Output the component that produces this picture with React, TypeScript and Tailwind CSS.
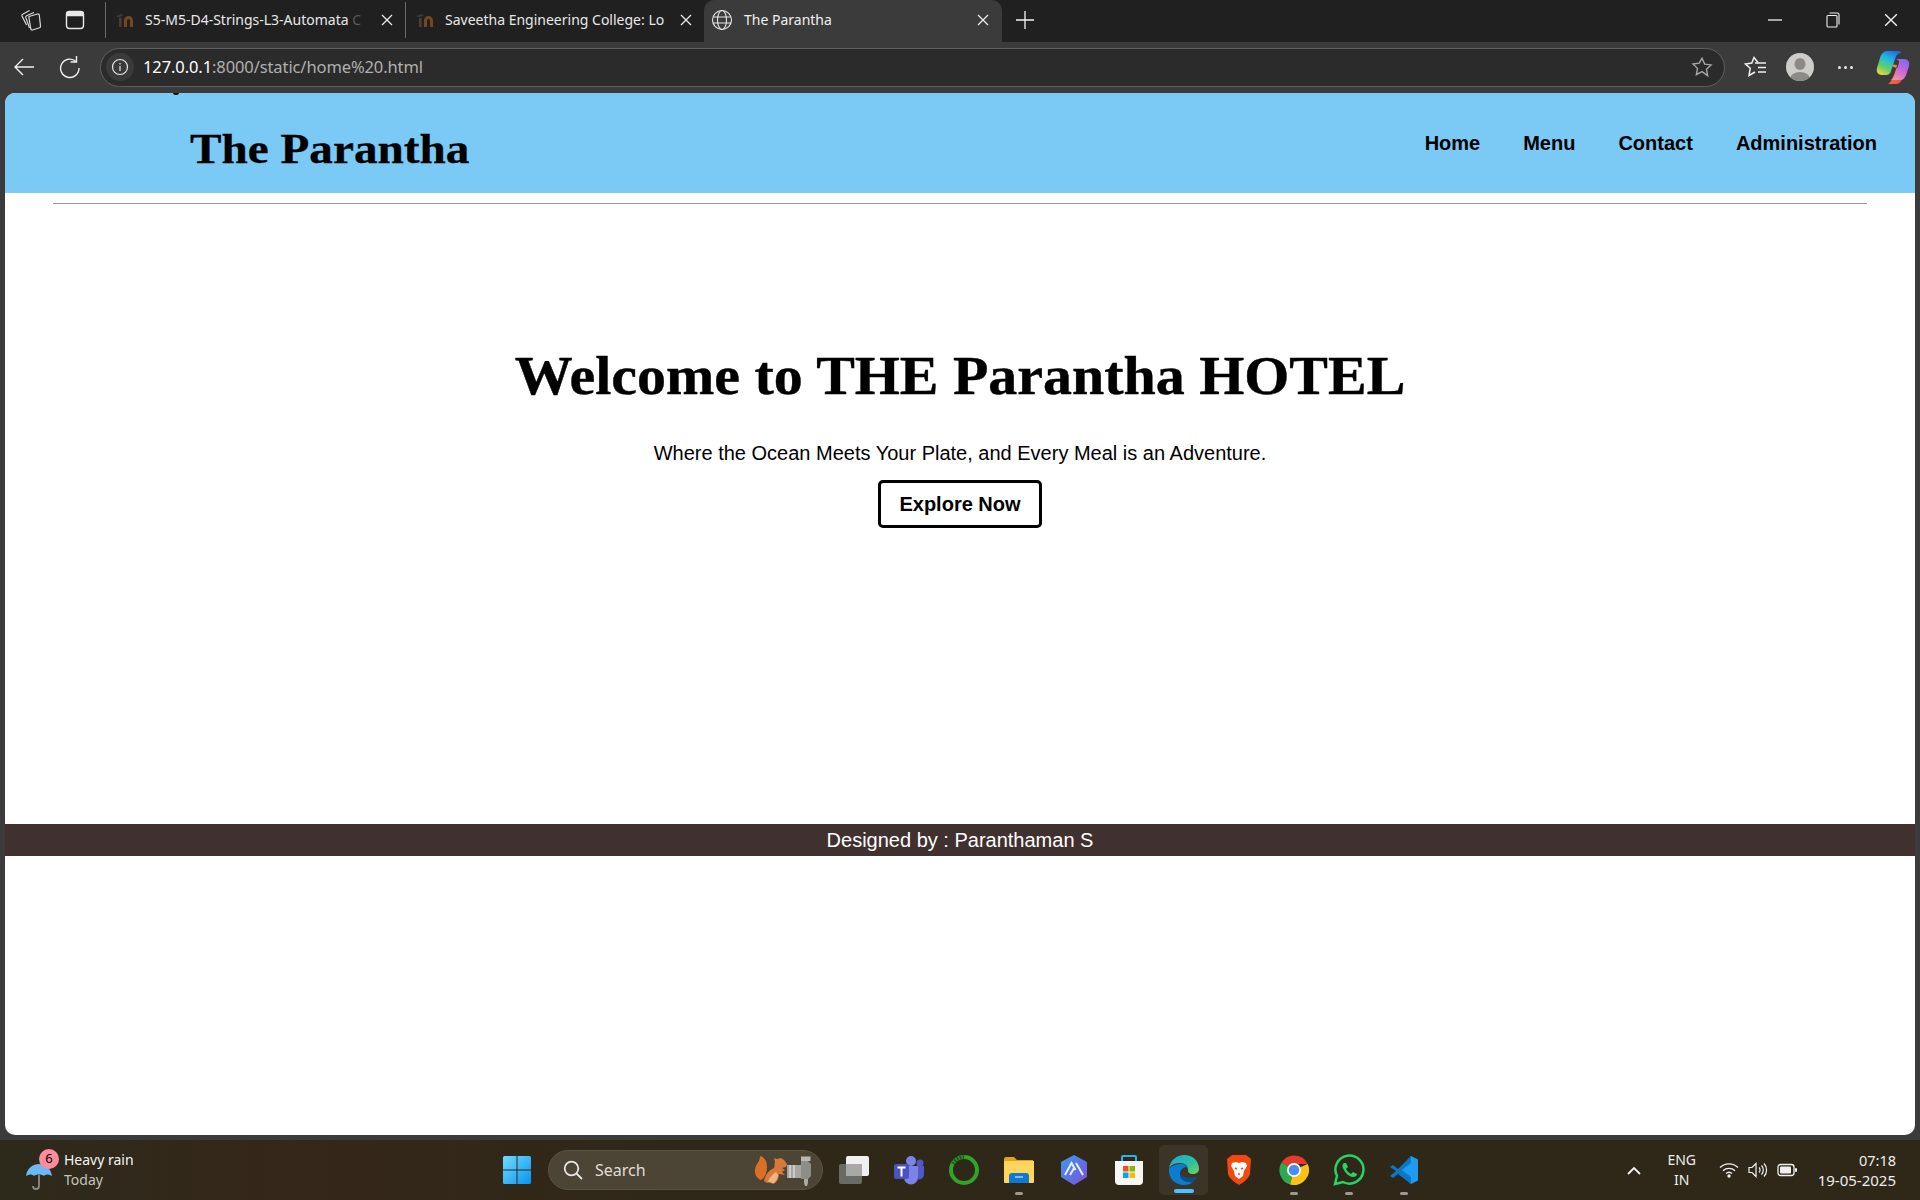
import React from "react";

const ui = { fontFamily: '"Noto Sans", "Open Sans", sans-serif' };
const arial = { fontFamily: '"Liberation Sans", Arial, sans-serif' };
const serif = { fontFamily: '"Liberation Serif", "Times New Roman", serif' };

function Close({ size = 12 }: { size?: number }) {
  return (
    <svg width={size} height={size} viewBox="0 0 12 12" fill="none" stroke="#f0f0f0" strokeWidth="1.2" className="shrink-0">
      <path d="M1 1l10 10M11 1L1 11" />
    </svg>
  );
}

function InFav() {
  return (
    <svg width="22" height="16" viewBox="0 0 22 16" className="shrink-0">
      <path d="M1 4l5-2 3 1-5 2.500z" fill="#3d3a36" />
      <path d="M4 6h2.600v9H4z" fill="#4f3c2a" />
      <path d="M9 15V8.500a4.500 4.500 0 0 1 9 0V15h-3V8.500a1.500 1.500 0 0 0-3 0V15z" fill="#74471f" />
    </svg>
  );
}

function Tab({ title, faded, w }: { title: string; faded: string; w: string }) {
  return (
    <div className={`flex items-center h-[36px] border-l border-[#6a6a6a] pl-[9px] pr-[12px] ${w}`}>
      <InFav />
      <span className="mb-[2px] ml-[8px] flex-1 whitespace-nowrap text-[14px] text-[#e8e8e8]" style={ui}>
        {title}
        <span className="text-[#5a5a5a]">{faded}</span>
      </span>
      <Close />
    </div>
  );
}

function Copilot() {
  return (
    <svg width="34" height="36" viewBox="0 0 34 36">
      <defs>
        <linearGradient id="cpa" x1="0.7" y1="0" x2="0.2" y2="1"><stop offset="0" stopColor="#1d6fe8" /><stop offset="0.35" stopColor="#22b8e0" /><stop offset="0.7" stopColor="#5fd06a" /><stop offset="1" stopColor="#f2d23a" /></linearGradient>
        <linearGradient id="cpb" x1="0.8" y1="0" x2="0.3" y2="1"><stop offset="0" stopColor="#7a6cf0" /><stop offset="0.5" stopColor="#c765dd" /><stop offset="1" stopColor="#f08fa8" /></linearGradient>
        <linearGradient id="cpc" x1="0" y1="0" x2="1" y2="1"><stop offset="0" stopColor="#f6a02c" /><stop offset="1" stopColor="#ee3f4a" /></linearGradient>
      </defs>
      <path d="M12 15l9 1c-1 5-3 11-6 16-1 2-3 3-3 3h8c3 0 5-2 6-5l2-7z" fill="url(#cpc)" />
      <path d="M11 2h11c2 0 3 1 3 2-3 0-5 2-6 6l-4 12c-1 3-3 4-5 4H6c-4 0-6-3-5-7l3-10c1-4 4-7 7-7z" fill="url(#cpa)" />
      <path d="M20 10h8c4 0 6 3 5 7l-3 9c-1 3-3 5-6 5h-9c2-1 3-3 4-6l4-11c0-2 0-3-3-4z" fill="url(#cpb)" />
    </svg>
  );
}

function WinLogo() {
  return (
    <svg width="30" height="30" viewBox="0 0 30 30">
      <defs>
        <linearGradient id="win" x1="0" y1="0" x2="1" y2="1"><stop offset="0" stopColor="#6fdcff" /><stop offset="1" stopColor="#0a93f0" /></linearGradient>
      </defs>
      <path d="M1 2.5A1.5 1.5 0 0 1 2.500 1H14.500V14.500H1zM15.500 1H27.500A1.500 1.500 0 0 1 29 2.500V14.500H15.500zM1 15.500H14.500V29H2.500A1.500 1.500 0 0 1 1 27.500zM15.500 15.500H29V27.500A1.500 1.500 0 0 1 27.500 29H15.500z" fill="url(#win)" />
    </svg>
  );
}

function Squirrel() {
  return (
    <svg width="62" height="32" viewBox="0 0 62 32" className="shrink-0">
      <path d="M7 26C1 24-1 16 3 10c2-3 3-5 3-8 4 1 7 5 7 10 0 5-1 11-6 14z" fill="#d96f28" />
      <path d="M10 27c1-6 5-11 10-13 1-2 0-4 1-6l-1-4 3 1 4-1 3 2 3 4-1 3-4 1 3 2-3 2 3 3-6-1c0 5-3 10-7 10l-1-2-4 1z" fill="#d57a38" />
      <path d="M14 27c2-4 5-7 8-9l2 3c0 3-2 6-4 8-2 0-4 0-6-2z" fill="#f2b483" />
      <path d="M33 11h14v13H33z" fill="#a5a5a1" />
      <path d="M36 11v13M40 11v13" stroke="#e3e3df" strokeWidth="1.200" />
      <path d="M47 7h7l3 3v12l-3 3h-7z" fill="#8e8e89" />
      <path d="M47 2.500h9.500V7H47z" fill="#b9b9b4" />
      <path d="M50 25h4v4l-1 3h-2l-1-3z" fill="#aaaaa5" />
    </svg>
  );
}

function Slot({ children, dot }: { children: React.ReactNode; dot?: boolean }) {
  return (
    <div className="relative flex h-[50px] w-[55px] items-center justify-center">
      {children}
      {dot && <span className="absolute bottom-[0px] h-[3px] w-[8px] rounded-full bg-[#9a9a92]" />}
    </div>
  );
}

export default function App() {
  return (
    <div className="flex h-[1200px] w-[1920px] flex-col overflow-hidden bg-[#3b3b3b]">
      {/* tab strip */}
      <div className="flex h-[42px] items-center bg-[#202020] pb-[2px]">
        <div className="flex w-[62px] justify-center">
          <svg width="24" height="24" viewBox="0 0 24 24" fill="none" stroke="#d8d8d8" strokeWidth="1.200">
            <path d="M10 8.500l8.500-2.500a1.500 1.500 0 0 1 1.800 1l1.200 11a1.500 1.500 0 0 1-1 1.700L13.500 22a1.500 1.500 0 0 1-1.700-1L10 10z" />
            <path d="M10.500 20L6.800 9.500a1.500 1.500 0 0 1 .8-1.800L15 4.500" />
            <path d="M7.500 17L3 8a1.500 1.500 0 0 1 .7-1.800L10.500 2.500" />
          </svg>
        </div>
        <div className="-ml-[8px] flex w-[42px] justify-center">
          <svg width="20" height="20" viewBox="0 0 20 20" fill="none" stroke="#e8e8e8" strokeWidth="1.400">
            <rect x="1.500" y="1.500" width="17" height="17" rx="3" />
            <path d="M2 2.500h16v3H2z" fill="#e8e8e8" />
          </svg>
        </div>
        <div className="ml-[9px] flex items-center">
          <Tab title="S5-M5-D4-Strings-L3-Automata " faded="C" w="w-[300px]" />
          <Tab title="Saveetha Engineering College: Lo" faded="" w="w-[299px]" />
        </div>
        <div className="flex h-[42px] w-[298px] self-start items-center rounded-t-[10px] bg-[#3b3b3b] pb-[2px] pl-[6px] pr-[13px]">
          <svg width="22" height="22" viewBox="0 0 22 22" fill="none" stroke="#e8e8e8" strokeWidth="1.100" className="ml-[1px] shrink-0">
            <circle cx="11" cy="11" r="9.500" />
            <ellipse cx="11" cy="11" rx="4.500" ry="9.500" />
            <path d="M2 8h18M2 14h18" />
          </svg>
          <span className="mb-[2px] ml-[11px] flex-1 text-[14px] text-[#f0f0f0]" style={ui}>The Parantha</span>
          <Close />
        </div>
        <div className="ml-[14px] flex">
          <svg width="18" height="18" viewBox="0 0 18 18" stroke="#f4f4f4" strokeWidth="1.300"><path d="M9 0v18M0 9h18" /></svg>
        </div>
        <div className="ml-auto flex items-center">
          <div className="flex w-[58px] justify-center">
            <svg width="14" height="2" viewBox="0 0 14 2"><path d="M0 1h14" stroke="#f0f0f0" strokeWidth="1.300" /></svg>
          </div>
          <div className="flex w-[58px] justify-center">
            <svg width="14" height="16" viewBox="0 0 14 16" fill="none" stroke="#f0f0f0" strokeWidth="1.100"><rect x="1" y="3.500" width="10" height="11.500" rx="1" /><path d="M3.500 1h8a1.500 1.500 0 0 1 1.500 1.500v10" /></svg>
          </div>
          <div className="flex w-[58px] justify-center">
            <Close size={14} />
          </div>
        </div>
      </div>

      {/* toolbar */}
      <div className="flex h-[51px] items-center pb-[1px]">
        <div className="flex w-[48px] justify-center">
          <svg width="22" height="20" viewBox="0 0 22 20" fill="none" stroke="#f0f0f0" strokeWidth="1.400"><path d="M21 10H2M10 2l-8 8 8 8" /></svg>
        </div>
        <div className="flex w-[44px] justify-center">
          <svg width="22" height="24" viewBox="0 0 22 24" fill="none" stroke="#f0f0f0" strokeWidth="1.400"><path d="M17 6.500A9.200 9.200 0 1 0 20 13" /><path d="M17.500 1v6h-6" /></svg>
        </div>
        <div className="ml-[8px] flex h-[39px] w-[1625px] items-center rounded-full border border-[#5f5f5f] bg-[#2b2b2b] pl-[5px] pr-[11px]">
          <div className="flex h-[28px] w-[28px] items-center justify-center rounded-full bg-[#3a3a3a]">
            <svg width="18" height="18" viewBox="0 0 18 18" fill="none" stroke="#e8e8e8" strokeWidth="1.200"><circle cx="9" cy="9" r="7.500" /><path d="M9 8v5M9 5v1.500" /></svg>
          </div>
          <span className="ml-[9px] mt-[1px] whitespace-nowrap text-[16.500px] tracking-[-0.1px]" style={ui}>
            <span className="text-white">127.0.0.1</span>
            <span className="text-[#b0b0b0]">:8000/static/home%20.html</span>
          </span>
          <span className="ml-auto flex">
            <svg width="22" height="22" viewBox="0 0 24 24" fill="none" stroke="#a8a8a8" strokeWidth="1.500"><path d="M12 2.500l3 6.300 6.900.9-5 4.800 1.300 6.900L12 17.100 5.800 20.400l1.300-6.900-5-4.800 6.900-.9z" /></svg>
          </span>
        </div>
        <div className="flex w-[61px] justify-center">
          <svg width="24" height="24" viewBox="0 0 24 24" fill="none" stroke="#f0f0f0" strokeWidth="1.500"><path d="M14 7.500L10 2.500 7.800 8 1.500 9l4.700 4.300L5 20.500l6-3.500" /><path d="M11 8h11M14 12.500h8M14 17h8" /></svg>
        </div>
        <div className="flex h-[28px] w-[28px] items-center justify-center overflow-hidden rounded-full bg-[#cfcdc9]">
          <svg width="28" height="28" viewBox="0 0 28 28"><ellipse cx="14" cy="11" rx="5.500" ry="6" fill="#8c8a86" /><ellipse cx="14" cy="26" rx="10" ry="7" fill="#8c8a86" /></svg>
        </div>
        <div className="flex w-[62px] justify-center gap-[3px]">
          <span className="h-[3px] w-[3px] rounded-full bg-[#e8e8e8]" />
          <span className="h-[3px] w-[3px] rounded-full bg-[#e8e8e8]" />
          <span className="h-[3px] w-[3px] rounded-full bg-[#e8e8e8]" />
        </div>
        <div className="flex"><Copilot /></div>
      </div>

      {/* page */}
      <div className="relative mx-[5px] flex h-[1042px] flex-col overflow-hidden rounded-[10px] bg-white">
        <header className="flex h-[100px] shrink-0 items-center justify-between bg-[#7bc9f5] pl-[185px] pr-[38px]">
          <span className="absolute left-[168px] top-[-3px] h-[5px] w-[6px] rounded-full bg-black" />
          <h1 className="mt-[11px] origin-left scale-x-[1.098] text-[43px] font-bold leading-none text-black [-webkit-text-stroke:0.3px_black]" style={serif}>The Parantha</h1>
          <nav className="flex gap-[43px] text-[20px] font-bold text-black" style={arial}>
            <span>Home</span>
            <span>Menu</span>
            <span>Contact</span>
            <span>Administration</span>
          </nav>
        </header>
        <main className="flex h-[631px] shrink-0 flex-col items-center" style={arial}>
          <div className="mt-[10px] h-[1px] w-[1814px] shrink-0 bg-[#999999]" />
          <h2 className="mt-[142px] scale-x-[1.073] text-[54px] font-bold leading-[60px] text-black [-webkit-text-stroke:0.4px_black]" style={serif}>Welcome to THE Parantha HOTEL</h2>
          <p className="mt-[31px] text-[20px] leading-[32px] text-black">Where the Ocean Meets Your Plate, and Every Meal is an Adventure.</p>
          <button className="mt-[11px] h-[48px] w-[164px] rounded-[5px] border-[3px] border-black bg-white text-[20px] font-bold text-black">Explore Now</button>
        </main>
        <footer className="flex h-[32px] shrink-0 items-center justify-center bg-[#413030] text-[20px] text-white" style={arial}>
          Designed by : Paranthaman S
        </footer>
      </div>

      {/* taskbar */}
      <div className="mt-[5px] flex h-[60px] shrink-0 items-center bg-[linear-gradient(90deg,#2d2a1b,#35271a_15%,#2f2818_35%,#2f2818_100%)] text-white" style={ui}>
        <div className="flex w-[502px] shrink-0 items-center">
          <div className="relative ml-[24px] h-[44px] w-[40px]">
            <svg width="30" height="30" viewBox="0 0 30 30" className="absolute left-[1px] top-[13px]">
              <path d="M1 15C2 7 8 3 14 3s12 4 13 12c-3-2-6-2-8 0-2-2-8-2-10 0-2-2-5-2-8 0z" fill="#6cb8f4" />
              <path d="M14 14v11a3 3 0 0 1-6 0" fill="none" stroke="#8a8a86" strokeWidth="1.800" />
            </svg>
            <span className="absolute left-[15px] top-[1px] flex h-[20px] w-[20px] items-center justify-center rounded-full bg-[#ff8b9c] text-[13px] text-black">6</span>
          </div>
          <div className="flex flex-col leading-[20px]">
            <span className="text-[14px] text-[#f4f4f4]">Heavy rain</span>
            <span className="text-[14px] text-[#c4c4bc]">Today</span>
          </div>
        </div>
        <div className="flex h-[50px] w-[30px] items-center justify-center"><WinLogo /></div>
        <div className="ml-[16px] flex h-[40px] w-[275px] items-center rounded-full border border-[#5c5442] bg-[#4c4434] pl-[14px] pr-[6px]">
          <svg width="20" height="20" viewBox="0 0 20 20" fill="none" stroke="#e8e8e8" strokeWidth="1.800"><circle cx="8.500" cy="8.500" r="6.800" /><path d="M13.500 13.500L19 19" /></svg>
          <span className="ml-[12px] flex-1 text-[16px] text-[#e2ded6]">Search</span>
          <Squirrel />
        </div>
        <div className="ml-[3px]" />
        <Slot>
          <svg width="32" height="30" viewBox="0 0 32 30"><rect x="1" y="9" width="23" height="20" rx="2" fill="#6a6a66" /><rect x="8" y="1" width="23" height="20" rx="2" fill="#f0f0f0" /><rect x="8" y="9" width="16" height="12" fill="#a8a8a6" /></svg>
        </Slot>
        <Slot>
          <svg width="32" height="30" viewBox="0 0 32 30">
            <circle cx="18" cy="6" r="5" fill="#7b83eb" /><circle cx="27" cy="8" r="3.500" fill="#5059c9" />
            <path d="M22 11h9v9a5 5 0 0 1-7 4z" fill="#5059c9" /><path d="M9 11h16v11a7 7 0 0 1-14 1z" fill="#7b83eb" />
            <rect x="1" y="9" width="15" height="15" rx="2" fill="#4b53bc" />
            <path d="M4.500 12.500h8M8.500 12.500v9" stroke="#fff" strokeWidth="2" />
          </svg>
        </Slot>
        <Slot>
          <svg width="32" height="32" viewBox="0 0 32 32" fill="none"><circle cx="16" cy="16" r="13" stroke="#2fa52a" strokeWidth="4" /><path d="M5 10a13 13 0 0 1 11-7" stroke="#1d5e1e" strokeWidth="4" strokeDasharray="2 1" /></svg>
        </Slot>
        <Slot dot>
          <svg width="32" height="28" viewBox="0 0 32 28">
            <path d="M1 3a2 2 0 0 1 2-2h8l3 3h16v4H1z" fill="#e0a510" />
            <path d="M1 5h30v21a1 1 0 0 1-1 1H2a1 1 0 0 1-1-1z" fill="#ffd65c" />
            <path d="M6 27v-7a3 3 0 0 1 3-3h14a3 3 0 0 1 3 3v7z" fill="#0f78d4" />
            <path d="M12 21h8" stroke="#9fd4fb" strokeWidth="1.500" />
          </svg>
        </Slot>
        <Slot>
          <svg width="32" height="32" viewBox="0 0 32 32">
            <defs><linearGradient id="hx" x1="0" y1="0" x2="1" y2="1"><stop offset="0" stopColor="#3f9be8" /><stop offset="1" stopColor="#7a4fe0" /></linearGradient></defs>
            <path d="M16 1l13 7v15l-13 8-13-8V8z" fill="url(#hx)" />
            <path d="M7 21L13.500 9l4 7M12 21l4-7M25 21L18 9" fill="none" stroke="#e8f0ff" strokeWidth="2" />
          </svg>
        </Slot>
        <Slot>
          <svg width="30" height="32" viewBox="0 0 30 32">
            <path d="M8 7V3a1 1 0 0 1 1-1h12a1 1 0 0 1 1 1v4" fill="none" stroke="#28b4ee" strokeWidth="2" />
            <path d="M1 7h28v20a4 4 0 0 1-4 4H5a4 4 0 0 1-4-4z" fill="#f6f6f4" />
            <rect x="9" y="12" width="5.500" height="5.500" fill="#f25022" /><rect x="15.500" y="12" width="5.500" height="5.500" fill="#7fba00" />
            <rect x="9" y="18.500" width="5.500" height="5.500" fill="#00a4ef" /><rect x="15.500" y="18.500" width="5.500" height="5.500" fill="#ffb900" />
          </svg>
        </Slot>
        <div className="relative mx-[3px] flex h-[50px] w-[49px] items-center justify-center rounded-[5px] bg-[#3b3427]">
          <svg width="32" height="32" viewBox="0 0 32 32">
            <defs><linearGradient id="edg" x1="0" y1="0" x2="1" y2="1"><stop offset="0" stopColor="#1fa8d8" /><stop offset="0.6" stopColor="#2cc0a0" /><stop offset="1" stopColor="#7ad650" /></linearGradient></defs>
            <path d="M1 15C2 6 9 1 16 1c9 0 15 6 15 14 0 3-3 5-6 5-4 0-5-2-5-4 0-4-3-7-8-7C7 9 2 11 1 15z" fill="url(#edg)" />
            <path d="M1 15c-1 9 6 16 15 16 4 0 7-1 9-3-7 1-13-2-13-8 0-4 3-7 7-7-2-3-5-4-9-3-5 1-8 3-9 5z" fill="#0c7cd0" />
            <path d="M12 20c0 6 6 9 13 8 2-1 3-3 4-5-3 1-12 2-17-3z" fill="#0b4f92" />
          </svg>
          <span className="absolute bottom-[2px] h-[4px] w-[20px] rounded-full bg-[#4cc2ff]" />
        </div>
        <Slot>
          <svg width="26" height="32" viewBox="0 0 26 32">
            <path d="M6 1h14l5 4-1 15c-1 4-7 9-11 11C9 29 3 24 2 20L1 5z" fill="#f1490f" />
            <path d="M6 9l4-1 3 1 3-1 4 1 1 3-3 5-1 5-4 3-4-3-1-5-3-5z" fill="#fff" />
            <path d="M9 14l2 1M17 14l-2 1M12 20h2" stroke="#f1490f" strokeWidth="1.400" />
          </svg>
        </Slot>
        <Slot dot>
          <svg width="30" height="30" viewBox="0 0 30 30">
            <path d="M15 15L2.500 7.500A15 15 0 0 1 28.700 9H15z" fill="#e33b2e" />
            <path d="M2.500 7.500A15 15 0 0 0 11 29.500L15 15z" fill="#2da94f" />
            <path d="M28.700 9A15 15 0 0 1 11 29.500L15 15z" fill="#fbc116" />
            <circle cx="15" cy="15" r="7" fill="#fff" /><circle cx="15" cy="15" r="5.300" fill="#4a8df0" />
          </svg>
        </Slot>
        <Slot dot>
          <svg width="32" height="32" viewBox="0 0 32 32" fill="none">
            <path d="M2 30l2-8A14 14 0 1 1 10 28z" stroke="#25d366" strokeWidth="2.500" />
            <path d="M11 9c-2 1-2 4 0 7 2 4 6 7 9 7 3 0 4-2 4-3l-4-2-2 2c-2-1-4-3-5-5l2-2-2-4z" fill="#25d366" />
          </svg>
        </Slot>
        <Slot dot>
          <svg width="30" height="30" viewBox="0 0 30 30">
            <path d="M22 1l7 3.500v21L22 29l-13-12z" fill="#1f9cf0" />
            <path d="M22 1L9 14 4 10 1 12l6 4-6 5 3 2 5-4 13 10V22L13 15l9-7z" fill="#0a78c8" />
          </svg>
        </Slot>
        <div className="ml-auto flex items-center">
          <svg width="14" height="9" viewBox="0 0 14 9" fill="none" stroke="#f4f4f4" strokeWidth="1.800"><path d="M1 8l6-6 6 6" /></svg>
          <div className="ml-[18px] flex w-[46px] flex-col items-center text-[14px] leading-[20px] text-[#eeeeee]">
            <span>ENG</span>
            <span>IN</span>
          </div>
          <svg width="20" height="16" viewBox="0 0 20 16" fill="none" stroke="#f0f0f0" strokeWidth="1.400" className="ml-[14px]"><path d="M1 5.500a13 13 0 0 1 18 0M4 8.700a9 9 0 0 1 12 0M7 11.500a4.500 4.500 0 0 1 6 0" /><circle cx="10" cy="14" r="1" fill="#f0f0f0" /></svg>
          <svg width="20" height="16" viewBox="0 0 20 16" fill="none" stroke="#f0f0f0" strokeWidth="1.200" className="ml-[9px]"><path d="M1 5.500h3l4-4v13l-4-4H1zM11 5.500a3.500 3.500 0 0 1 0 5M13.500 3.500a6.500 6.500 0 0 1 0 9M16 1.500a9.500 9.500 0 0 1 0 13" /></svg>
          <svg width="21" height="14" viewBox="0 0 21 14" fill="none" className="ml-[9px]"><rect x="1" y="1.500" width="16" height="11" rx="2.500" stroke="#f0f0f0" strokeWidth="1.300" /><rect x="3" y="3.500" width="11" height="7" rx="1" fill="#f0f0f0" /><rect x="18" y="5" width="2" height="4" rx="1" fill="#f0f0f0" /></svg>
          <div className="ml-[20px] mr-[24px] flex flex-col items-end text-[15px] leading-[20px] text-[#eeeeee]">
            <span className="text-[14.500px]">07:18</span>
            <span>19-05-2025</span>
          </div>
        </div>
      </div>
    </div>
  );
}
